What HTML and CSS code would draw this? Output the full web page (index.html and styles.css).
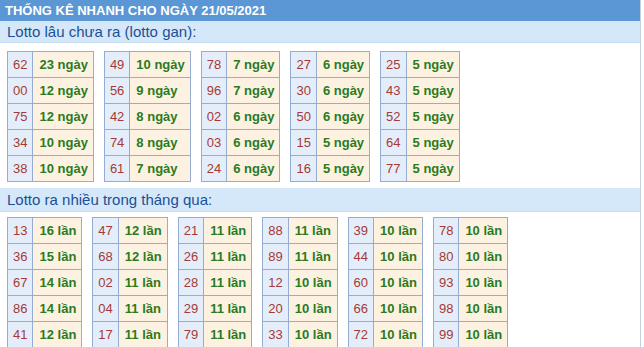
FILE: index.html
```html
<!DOCTYPE html>
<html lang="vi">
<head>
<meta charset="utf-8">
<title>Thống kê nhanh</title>
<link rel="stylesheet" href="styles.css">
</head>
<body>
<div class="wrap">
  <div class="head">THỐNG KÊ NHANH CHO NGÀY 21/05/2021</div>
  <div class="band band-1">Lotto lâu chưa ra (lotto gan):</div>
  <div class="tables tables-1">
    <table class="t"><tr><td class="n">62</td><td class="v">23 ngày</td></tr><tr><td class="n">00</td><td class="v">12 ngày</td></tr><tr><td class="n">75</td><td class="v">12 ngày</td></tr><tr><td class="n">34</td><td class="v">10 ngày</td></tr><tr><td class="n">38</td><td class="v">10 ngày</td></tr></table>
    <table class="t"><tr><td class="n">49</td><td class="v">10 ngày</td></tr><tr><td class="n">56</td><td class="v">9 ngày</td></tr><tr><td class="n">42</td><td class="v">8 ngày</td></tr><tr><td class="n">74</td><td class="v">8 ngày</td></tr><tr><td class="n">61</td><td class="v">7 ngày</td></tr></table>
    <table class="t"><tr><td class="n">78</td><td class="v">7 ngày</td></tr><tr><td class="n">96</td><td class="v">7 ngày</td></tr><tr><td class="n">02</td><td class="v">6 ngày</td></tr><tr><td class="n">03</td><td class="v">6 ngày</td></tr><tr><td class="n">24</td><td class="v">6 ngày</td></tr></table>
    <table class="t"><tr><td class="n">27</td><td class="v">6 ngày</td></tr><tr><td class="n">30</td><td class="v">6 ngày</td></tr><tr><td class="n">50</td><td class="v">6 ngày</td></tr><tr><td class="n">15</td><td class="v">5 ngày</td></tr><tr><td class="n">16</td><td class="v">5 ngày</td></tr></table>
    <table class="t"><tr><td class="n">25</td><td class="v">5 ngày</td></tr><tr><td class="n">43</td><td class="v">5 ngày</td></tr><tr><td class="n">52</td><td class="v">5 ngày</td></tr><tr><td class="n">64</td><td class="v">5 ngày</td></tr><tr><td class="n">77</td><td class="v">5 ngày</td></tr></table>
  </div>
  <div class="band band-2">Lotto ra nhiều trong tháng qua:</div>
  <div class="tables tables-2">
    <table class="t"><tr><td class="n">13</td><td class="v">16 lần</td></tr><tr><td class="n">36</td><td class="v">15 lần</td></tr><tr><td class="n">67</td><td class="v">14 lần</td></tr><tr><td class="n">86</td><td class="v">14 lần</td></tr><tr><td class="n">41</td><td class="v">12 lần</td></tr></table>
    <table class="t"><tr><td class="n">47</td><td class="v">12 lần</td></tr><tr><td class="n">68</td><td class="v">12 lần</td></tr><tr><td class="n">02</td><td class="v">11 lần</td></tr><tr><td class="n">04</td><td class="v">11 lần</td></tr><tr><td class="n">17</td><td class="v">11 lần</td></tr></table>
    <table class="t"><tr><td class="n">21</td><td class="v">11 lần</td></tr><tr><td class="n">26</td><td class="v">11 lần</td></tr><tr><td class="n">28</td><td class="v">11 lần</td></tr><tr><td class="n">29</td><td class="v">11 lần</td></tr><tr><td class="n">79</td><td class="v">11 lần</td></tr></table>
    <table class="t"><tr><td class="n">88</td><td class="v">11 lần</td></tr><tr><td class="n">89</td><td class="v">11 lần</td></tr><tr><td class="n">12</td><td class="v">10 lần</td></tr><tr><td class="n">20</td><td class="v">10 lần</td></tr><tr><td class="n">33</td><td class="v">10 lần</td></tr></table>
    <table class="t"><tr><td class="n">39</td><td class="v">10 lần</td></tr><tr><td class="n">44</td><td class="v">10 lần</td></tr><tr><td class="n">60</td><td class="v">10 lần</td></tr><tr><td class="n">66</td><td class="v">10 lần</td></tr><tr><td class="n">72</td><td class="v">10 lần</td></tr></table>
    <table class="t"><tr><td class="n">78</td><td class="v">10 lần</td></tr><tr><td class="n">80</td><td class="v">10 lần</td></tr><tr><td class="n">93</td><td class="v">10 lần</td></tr><tr><td class="n">98</td><td class="v">10 lần</td></tr><tr><td class="n">99</td><td class="v">10 lần</td></tr></table>
  </div>
</div>
</body>
</html>
```

FILE: styles.css
```css
html, body {
  margin: 0;
  padding: 0;
  background: #ffffff;
}
body {
  font-family: "Liberation Sans", Arial, sans-serif;
  font-size: 13px;
}
.wrap {
  width: 640px;
  border-right: 1px solid #c5d1de;
  min-height: 347px;
}
.head {
  height: 21px;
  line-height: 21px;
  background: #5b96d5;
  color: #ffffff;
  font-weight: bold;
  font-size: 13px;
  padding-left: 5px;
}
.band {
  background: #d5e8fa;
  color: #1c4f96;
  font-size: 15px;
  padding-left: 7px;
  border-bottom: 1px solid #c6dcf1;
}
.band-1 {
  height: 21px;
  line-height: 22px;
}
.band-2 {
  height: 23px;
  line-height: 23px;
  margin-top: 6px;
}
.tables {
  display: flex;
  align-items: flex-start;
  padding-left: 7px;
}
.tables-1 {
  padding-top: 8px;
  gap: 10px;
}
.tables-2 {
  padding-top: 5px;
  gap: 10px;
}
.t {
  border-collapse: collapse;
}
.t td {
  border: 1px solid #94add0;
  line-height: 15px;
  font-size: 13px;
  white-space: nowrap;
}
.t td.n {
  background: #e4eefa;
  color: #a53a35;
  padding: 5px 5px;
}
.t td.v {
  background: #fdf2e1;
  color: #2b7a1f;
  font-weight: bold;
  padding: 5px 5px 5px 6px;
}
```
